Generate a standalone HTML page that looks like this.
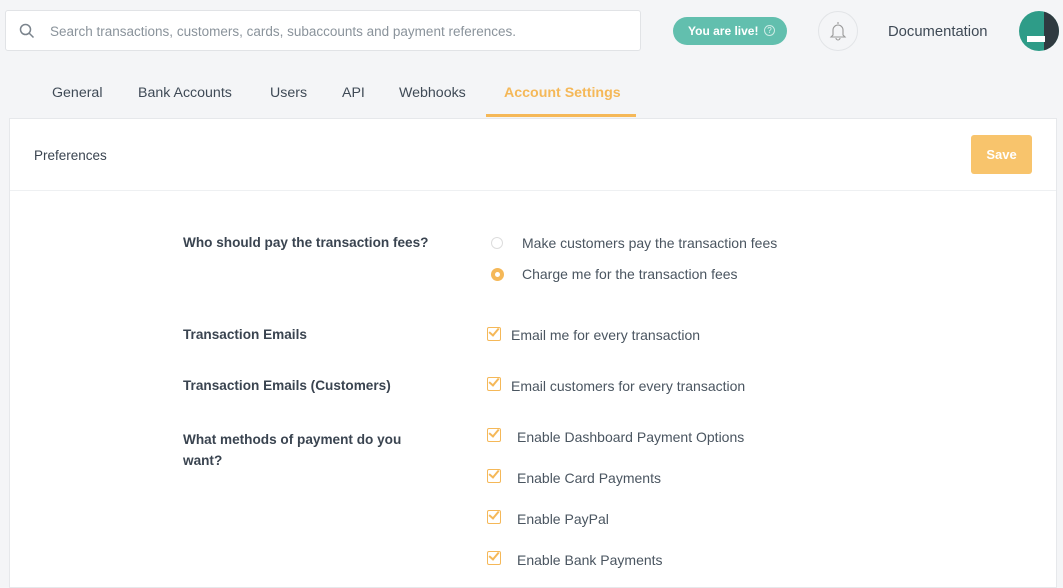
<!DOCTYPE html><html><head><style>
body{margin:0;width:1063px;height:573px;background:#f4f5f7;font-family:"Liberation Sans",sans-serif;overflow:hidden;position:relative;color:#3f4a56}
.a{position:absolute;white-space:nowrap}
.search{left:5px;top:10px;width:636px;height:41px;background:#fff;border:1px solid #e1e3e6;border-radius:3px;box-sizing:border-box}
.tab{top:85px;font-size:14.2px;color:#3f4a56}
.card{left:9px;top:118px;width:1048px;height:470px;background:#fff;border:1px solid #e6e8eb;box-sizing:border-box}
.lbl{font-size:13.6px;font-weight:bold;color:#3a4450}
.t{font-size:14px;color:#4a5560}
.cb{width:14px;height:14px;border:1.5px solid #f5b858;border-radius:2px;box-sizing:border-box}
.cb:after{content:"";position:absolute;left:3px;top:-2px;width:4px;height:8px;border:solid #f5b858;border-width:0 2px 2px 0;transform:rotate(40deg)}
</style></head><body>
<div class="a search"></div>
<svg class="a" style="left:19px;top:23px" width="16" height="16"><circle cx="6.5" cy="6.5" r="5" fill="none" stroke="#7a838c" stroke-width="1.5"/><line x1="10" y1="10" x2="14.5" y2="14.5" stroke="#7a838c" stroke-width="1.5"/></svg>
<div class="a" style="left:50px;top:24px;font-size:13.5px;color:#8a939b">Search transactions, customers, cards, subaccounts and payment references.</div>
<div class="a" style="left:673px;top:17px;width:114px;height:28px;border-radius:14px;background:#62bfae"></div>
<div class="a" style="left:688px;top:24px;font-size:12px;font-weight:bold;color:#fff">You are live!</div>
<div class="a" style="left:764px;top:25px;width:9px;height:9px;border:1px solid #cdebe5;border-radius:50%;font-size:8px;color:#e4f5f2;text-align:center;line-height:9px">?</div>
<div class="a" style="left:818px;top:11px;width:40px;height:40px;border:1px solid #e2e4e7;border-radius:50%;box-sizing:border-box"></div>
<svg class="a" style="left:828px;top:20px" width="20" height="22"><path d="M10 2v2M5 15V10a5 5 0 0 1 10 0v5l2 2H3z M8 18a2 2 0 0 0 4 0" fill="none" stroke="#999" stroke-width="1.1"/></svg>
<div class="a" style="left:888px;top:24px;font-size:14.8px;color:#3f4a56">Documentation</div>
<div class="a" style="left:1019px;top:11px;width:40px;height:40px;border-radius:50%;background:#2e9c88;overflow:hidden"><div style="position:absolute;left:25px;top:0;width:15px;height:40px;background:#2f3a40"></div><div style="position:absolute;left:8px;top:25px;width:18px;height:6px;background:#fff"></div></div>
<div class="a tab" style="left:52px">General</div>
<div class="a tab" style="left:138px">Bank Accounts</div>
<div class="a tab" style="left:270px">Users</div>
<div class="a tab" style="left:342px">API</div>
<div class="a tab" style="left:399px">Webhooks</div>
<div class="a tab" style="left:504px;color:#f5b858;font-weight:bold">Account Settings</div>
<div class="a" style="left:486px;top:114px;width:150px;height:3px;background:#f5b858"></div>
<div class="a card"></div>
<div class="a" style="left:10px;top:190px;width:1046px;height:1px;background:#eef0f2"></div>
<div class="a" style="left:34px;top:148px;font-size:13.5px;color:#3a4450">Preferences</div>
<div class="a" style="left:971px;top:135px;width:61px;height:39px;background:#f8c46c;border-radius:3px;color:#fff;font-size:13px;font-weight:bold;text-align:center;line-height:39px">Save</div>
<div class="a lbl" style="left:183px;top:235px">Who should pay the transaction fees?</div>
<div class="a" style="left:491px;top:237px;width:12px;height:12px;border:1px solid #ddd;border-radius:50%;box-sizing:border-box"></div>
<div class="a t" style="left:522px;top:235px">Make customers pay the transaction fees</div>
<div class="a" style="left:491px;top:268px;width:13px;height:13px;background:#f5b858;border-radius:50%"><div style="margin:4px;width:5px;height:5px;background:#fff;border-radius:50%"></div></div>
<div class="a t" style="left:522px;top:266px">Charge me for the transaction fees</div>
<div class="a lbl" style="left:183px;top:327px">Transaction Emails</div>
<div class="a cb" style="left:487px;top:327px"></div>
<div class="a t" style="left:511px;top:327px">Email me for every transaction</div>
<div class="a lbl" style="left:183px;top:378px">Transaction Emails (Customers)</div>
<div class="a cb" style="left:487px;top:377px"></div>
<div class="a t" style="left:511px;top:378px">Email customers for every transaction</div>
<div class="a lbl" style="left:183px;top:429px;line-height:21px">What methods of payment do you<br>want?</div>
<div class="a cb" style="left:487px;top:428px"></div><div class="a t" style="left:517px;top:429px">Enable Dashboard Payment Options</div>
<div class="a cb" style="left:487px;top:469px"></div><div class="a t" style="left:517px;top:470px">Enable Card Payments</div>
<div class="a cb" style="left:487px;top:510px"></div><div class="a t" style="left:517px;top:511px">Enable PayPal</div>
<div class="a cb" style="left:487px;top:551px"></div><div class="a t" style="left:517px;top:552px">Enable Bank Payments</div>
</body></html>
